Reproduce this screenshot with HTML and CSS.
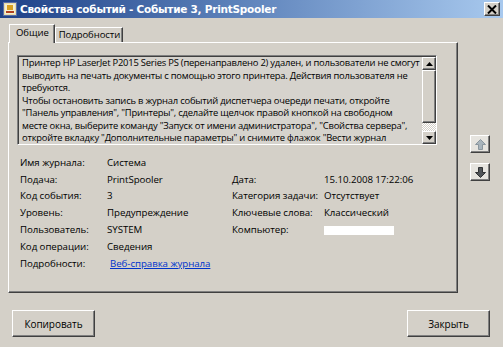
FILE: index.html
```html
<!DOCTYPE html>
<html lang="ru">
<head>
<meta charset="utf-8">
<title>Свойства событий</title>
<link rel="stylesheet" href="styles.css">
</head>
<body>
<div class="window">
  <div class="titlebar">
    <svg class="appicon" width="14" height="14" viewBox="0 0 14 14">
      <rect x="0.5" y="0.5" width="13" height="13" fill="#e8dca8" stroke="#5a6ea8"/>
      <rect x="2" y="2" width="10" height="10" fill="#f4eed0"/>
      <rect x="4" y="3" width="6" height="5" fill="#d8a020"/>
      <rect x="3" y="9" width="8" height="2" fill="#b04020"/>
    </svg>
    <span class="title">Свойства событий - Событие 3, PrintSpooler</span>
    <span class="close">
      <svg width="10" height="9" viewBox="0 0 10 9"><path d="M1 0.5 L9 8.5 M9 0.5 L1 8.5" stroke="#000" stroke-width="2"/></svg>
    </span>
  </div>
  <div class="main">
    <div class="leftcol">
      <div class="tabs">
        <div class="tab active">Общие</div>
        <div class="tab">Подробности</div>
      </div>
      <div class="panel">
        <div class="textbox">
          <div class="tbtext">Принтер HP LaserJet P2015 Series PS (перенаправлено 2) удален, и пользователи не смогут<br>выводить на печать документы с помощью этого принтера. Действия пользователя не<br>требуются.<br>Чтобы остановить запись в журнал событий диспетчера очереди печати, откройте<br>"Панель управления", "Принтеры", сделайте щелчок правой кнопкой на свободном<br>месте окна, выберите команду "Запуск от имени администратора", "Свойства сервера",<br>откройте вкладку "Дополнительные параметры" и снимите флажок "Вести журнал</div>
          <div class="scrollbar">
            <div class="sb-btn"><svg width="7" height="4" viewBox="0 0 7 4"><path d="M3.5 0 L7 4 L0 4 Z" fill="#000"/></svg></div>
            <div class="sb-track"><div class="sb-thumb"></div></div>
            <div class="sb-btn"><svg width="7" height="4" viewBox="0 0 7 4"><path d="M0 0 L7 0 L3.5 4 Z" fill="#000"/></svg></div>
          </div>
        </div>
        <div class="info">
          <span class="lbl">Имя журнала:</span><span>Система</span><span></span><span></span>
          <span class="lbl">Подача:</span><span>PrintSpooler</span><span class="lbl">Дата:</span><span>15.10.2008 17:22:06</span>
          <span class="lbl">Код события:</span><span>3</span><span class="lbl">Категория задачи:</span><span>Отсутствует</span>
          <span class="lbl">Уровень:</span><span>Предупреждение</span><span class="lbl">Ключевые слова:</span><span>Классический</span>
          <span class="lbl">Пользователь:</span><span>SYSTEM</span><span class="lbl">Компьютер:</span><span><span class="redact"></span></span>
          <span class="lbl">Код операции:</span><span>Сведения</span><span></span><span></span>
          <span class="lbl">Подробности:</span><span><a class="link" href="#">Веб-справка журнала</a></span><span></span><span></span>
        </div>
      </div>
    </div>
    <div class="side">
      <div class="nav">
        <svg width="11" height="11" viewBox="0 0 11 11"><path d="M5.5 0.5 L10.5 5.5 L7.5 5.5 L7.5 10.5 L3.5 10.5 L3.5 5.5 L0.5 5.5 Z" fill="#a8b4bc" stroke="#8a969e" stroke-width="1"/></svg>
      </div>
      <div class="nav">
        <svg width="11" height="11" viewBox="0 0 11 11"><path d="M5.5 10.5 L10.5 5.5 L7.5 5.5 L7.5 0.5 L3.5 0.5 L3.5 5.5 L0.5 5.5 Z" fill="#505458" stroke="#303234" stroke-width="1"/></svg>
      </div>
    </div>
  </div>
  <div class="actions">
    <div class="btn">Копировать</div>
    <div class="btn">Закрыть</div>
  </div>
</div>
</body>
</html>
```

FILE: styles.css
```css
* { box-sizing: border-box; }
html, body { margin: 0; padding: 0; }
body {
  background: #d4d0c8;
  font-family: "Open Sans", "Noto Sans", sans-serif;
  font-size: 9.7px;
  letter-spacing: -0.05px;
  color: #000;
}
.window {
  width: 503px;
  height: 347px;
  overflow: hidden;
}
.titlebar {
  height: 18px;
  display: flex;
  align-items: center;
  padding-left: 3px;
  background: linear-gradient(to right, #1e4188 0%, #5a7fb8 45%, #a8c9ee 100%);
}
.appicon { flex: none; margin-right: 3px; }
.title {
  color: #fff;
  font-family: "DejaVu Sans", sans-serif;
  font-weight: bold;
  font-size: 10.5px;
  letter-spacing: -0.25px;
  white-space: nowrap;
}
.close {
  margin-left: auto;
  margin-right: 3px;
  width: 16px;
  height: 14px;
  display: flex;
  align-items: center;
  justify-content: center;
  background: #d4d0c8;
  border: 1px solid;
  border-color: #fff #404040 #404040 #fff;
  box-shadow: inset -1px -1px #808080;
}
.main {
  display: flex;
  padding-top: 6px;
}
.leftcol {
  margin-left: 8px;
  width: 450px;
}
.tabs {
  height: 18px;
  display: flex;
  align-items: flex-end;
  padding-left: 1px;
}
.tab {
  height: 15px;
  padding: 0 2px 0 3px;
  display: flex;
  align-items: center;
  border: 1px solid;
  border-bottom: none;
  border-color: #fff #404040 transparent #fff;
  box-shadow: inset -1px 0 #808080;
  line-height: 1;
  font-size: 9.5px;
}
.tab.active {
  height: 19px;
  margin-bottom: -1px;
  padding: 0 5px 2px 6px;
  background: #d4d0c8;
  position: relative;
  z-index: 1;
}
.panel {
  height: 251px;
  border: 1px solid;
  border-color: #fff #404040 #404040 #fff;
  box-shadow: inset -1px -1px #808080;
  padding: 12px 0 0 8px;
}
.textbox {
  width: 420px;
  height: 90px;
  display: flex;
  border: 1px solid;
  border-color: #808080 #fff #fff #808080;
  box-shadow: inset 1px 1px #404040;
  background: #d6d3cd;
  overflow: hidden;
}
.tbtext {
  flex: 1;
  padding: 1px 0 0 4px;
  font-size: 9.4px;
  letter-spacing: -0.2px;
  line-height: 12.5px;
  white-space: nowrap;
  overflow: hidden;
}
.scrollbar {
  width: 14px;
  flex: none;
  display: flex;
  flex-direction: column;
  margin: 1px 0 0 0;
}
.sb-btn {
  height: 13px;
  display: flex;
  align-items: center;
  justify-content: center;
  background: #d4d0c8;
  border: 1px solid;
  border-color: #fff #404040 #404040 #fff;
  box-shadow: inset -1px -1px #808080;
}
.sb-track {
  flex: 1;
  background-color: #ece9e4;
  background-image: repeating-conic-gradient(#d4d0c8 0 25%, #fff 0 50%);
  background-size: 2px 2px;
  display: flex;
  flex-direction: column;
}
.sb-thumb {
  height: 53px;
  background: #d4d0c8;
  border: 1px solid;
  border-color: #fff #404040 #404040 #fff;
  box-shadow: inset -1px -1px #808080;
}
.info {
  margin: 9px 0 0 3px;
  display: grid;
  grid-template-columns: 87px 125px 92px 1fr;
  grid-auto-rows: 16.8px;
  align-items: center;
  white-space: nowrap;
}
.redact {
  display: inline-block;
  width: 70px;
  height: 9px;
  background: #fff;
  vertical-align: middle;
}
.link {
  color: #0033cc;
  text-decoration: underline;
  margin-left: 3px;
}
.side {
  margin-left: 12px;
  padding-top: 111px;
  display: flex;
  flex-direction: column;
  gap: 10px;
}
.nav {
  width: 20px;
  height: 18px;
  display: flex;
  align-items: center;
  justify-content: center;
  background: #e6e4df;
  border: 1px solid;
  border-color: #fff #404040 #404040 #fff;
  box-shadow: inset -1px -1px #808080;
}
.actions {
  margin-top: 17px;
  padding: 0 13px 0 12px;
  display: flex;
  justify-content: space-between;
}
.btn {
  width: 83px;
  height: 27px;
  display: flex;
  align-items: center;
  justify-content: center;
  font-size: 10px;
  background: #d4d0c8;
  border: 1px solid;
  border-color: #fff #404040 #404040 #fff;
  box-shadow: inset -1px -1px #808080;
}
```
